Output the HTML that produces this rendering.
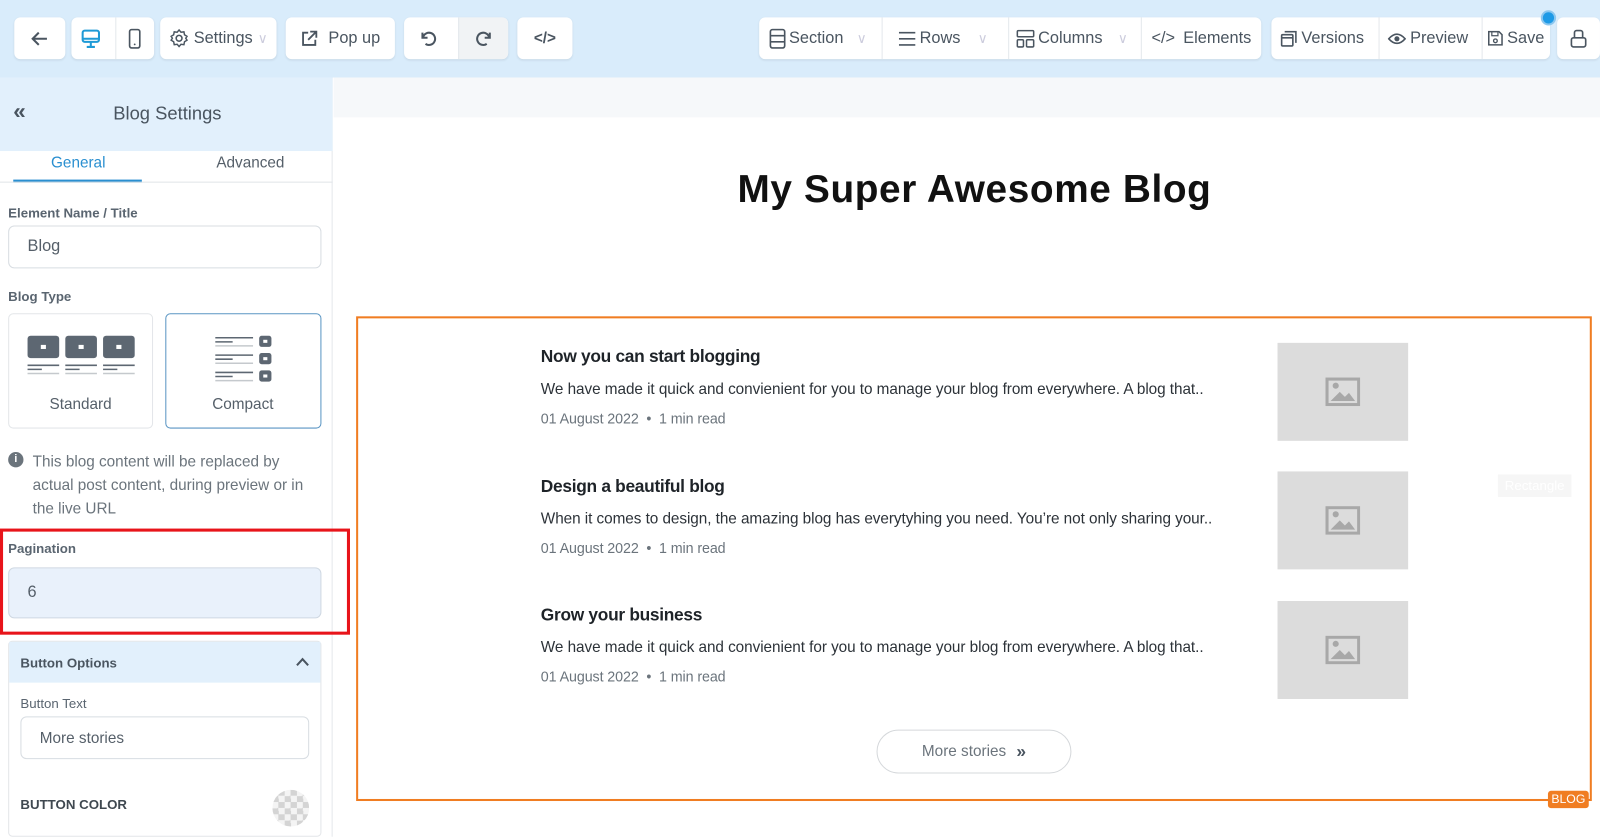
<!DOCTYPE html>
<html><head><meta charset="utf-8"><style>
*{box-sizing:border-box;margin:0;padding:0}
html,body{width:1600px;height:837px;overflow:hidden;background:#fff}
body{font-family:"Liberation Sans",sans-serif;color:#4a5560}
#w{position:absolute;left:0;top:0;width:1568px;height:820px;transform:scale(1.0204);transform-origin:0 0}
.a{position:absolute}
.btn{position:absolute;top:17px;height:41px;background:#fff;border-radius:6px;box-shadow:0 1px 2px rgba(0,0,0,.08);display:flex;align-items:center;justify-content:center;font-size:16px;color:#4a5560;gap:5px}
.sep{border-left:1px solid #e4e8ec}
svg{display:block}
.lbl{position:absolute;left:8px;font-size:13px;font-weight:bold;color:#5a6570}
.inp{position:absolute;left:8px;width:307px;height:42px;border:1px solid #d8dde2;border-radius:6px;font-size:16px;color:#555f69;padding-left:18px;display:flex;align-items:center}
.post{position:absolute;left:530px;font-family:"Liberation Sans",sans-serif}
.post h3{font-size:17px;font-weight:bold;color:#1e2328;letter-spacing:-.3px}
.post p{font-size:15px;color:#2c3238;margin-top:13px;letter-spacing:-.05px}
.post .m{font-size:14px;color:#6b747c;margin-top:12px;letter-spacing:-.1px}
.img{position:absolute;left:1252px;width:128px;height:96px;background:#dcdcdc;display:flex;align-items:center;justify-content:center}
</style></head><body><div id="w">
<div class="a" style="left:0;top:0;width:1568px;height:76px;background:#d9ecfb"></div>
<div class="btn" style="left:14px;width:50px"><svg width="18" height="18" viewBox="0 0 18 18"><path d="M16 9H3M8 3L2 9l6 6" stroke="#4a5560" stroke-width="2" fill="none"/></svg></div>
<div class="btn" style="left:70px;width:81px;justify-content:flex-start">
 <div style="width:40px;display:flex;justify-content:center"><svg width="20" height="20" viewBox="0 0 20 20"><rect x="2" y="2" width="16" height="11" rx="2" stroke="#1e9ad6" stroke-width="2" fill="none"/><path d="M2 10h16M10 13v4M6 18h8" stroke="#1e9ad6" stroke-width="2"/></svg></div>
 <div class="sep" style="width:41px;height:41px;display:flex;justify-content:center;align-items:center"><svg width="14" height="20" viewBox="0 0 14 20"><rect x="2" y="1" width="10" height="18" rx="2" stroke="#4a5560" stroke-width="1.6" fill="none"/><circle cx="7" cy="15.5" r=".9" fill="#4a5560"/></svg></div></div>
<div class="btn" style="left:157px;width:114px"><svg width="19" height="19" viewBox="0 0 20 20"><circle cx="10" cy="10" r="3" stroke="#4a5560" stroke-width="1.6" fill="none"/><path d="M10 1.5l2 2.3 3-.4.6 3 2.6 1.6-1.3 2 1.3 2-2.6 1.6-.6 3-3-.4-2 2.3-2-2.3-3 .4-.6-3L1.8 12l1.3-2-1.3-2 2.6-1.6.6-3 3 .4z" stroke="#4a5560" stroke-width="1.5" fill="none"/></svg>Settings<span style="color:#ccd;font-size:13px">&#x2228;</span></div>
<div class="btn" style="left:280px;width:107px"><svg width="18" height="18" viewBox="0 0 18 18"><path d="M8 3H3v12h12v-5M10 2h6v6M16 2L8 10" stroke="#4a5560" stroke-width="1.8" fill="none"/></svg>&nbsp;Pop up</div>
<div class="btn" style="left:396px;width:102px;justify-content:flex-start;overflow:hidden"><div style="width:50px;display:flex;justify-content:center"><svg width="18" height="18" viewBox="0 0 18 18"><path d="M3 3v5h5M3.5 8A6 6 0 1 1 6 14" stroke="#4a5560" stroke-width="2" fill="none"/></svg></div><div class="sep" style="width:52px;height:41px;background:#f1f3f5;display:flex;justify-content:center;align-items:center"><svg width="18" height="18" viewBox="0 0 18 18"><path d="M15 3v5h-5M14.5 8A6 6 0 1 0 12 14" stroke="#4a5560" stroke-width="2" fill="none"/></svg></div></div>
<div class="btn" style="left:507px;width:54px;font-weight:bold;font-size:15px">&lt;/&gt;</div>
<div class="btn" style="left:744px;width:492px;justify-content:flex-start">
 <div style="width:119px;display:flex;align-items:center;justify-content:center;gap:3px"><svg width="16" height="20" viewBox="0 0 16 20"><rect x="1" y="1" width="14" height="18" rx="2" stroke="#4a5560" stroke-width="1.6" fill="none"/><path d="M1 7h14M1 13h14" stroke="#4a5560" stroke-width="1.6"/></svg>Section <span style="color:#ccd;font-size:13px;margin-left:10px">&#x2228;</span></div>
 <div class="sep" style="width:122px;height:41px;display:flex;align-items:center;justify-content:center;gap:3px"><svg width="18" height="16" viewBox="0 0 18 16"><path d="M1 2h16M1 8h16M1 14h16" stroke="#4a5560" stroke-width="1.6"/></svg>Rows <span style="color:#ccd;font-size:13px;margin-left:14px">&#x2228;</span></div>
 <div class="sep" style="width:129px;height:41px;display:flex;align-items:center;justify-content:center;gap:3px"><svg width="18" height="18" viewBox="0 0 18 18"><rect x="1" y="1" width="16" height="6" rx="1" stroke="#4a5560" stroke-width="1.5" fill="none"/><rect x="1" y="10" width="6" height="7" rx="1" stroke="#4a5560" stroke-width="1.5" fill="none"/><rect x="10" y="10" width="7" height="7" rx="1" stroke="#4a5560" stroke-width="1.5" fill="none"/></svg>Columns <span style="color:#ccd;font-size:13px;margin-left:12px">&#x2228;</span></div>
 <div class="sep" style="width:122px;height:41px;display:flex;align-items:center;justify-content:center;gap:8px"><span style="font-size:16px">&lt;/&gt;</span>Elements</div></div>
<div class="btn" style="left:1246px;width:273px;justify-content:flex-start">
 <div style="width:104px;display:flex;align-items:center;justify-content:center;gap:4px"><svg width="16" height="16" viewBox="0 0 16 16"><rect x="1" y="4" width="11" height="11" rx="1" stroke="#4a5560" stroke-width="1.6" fill="none"/><path d="M4 1h11v11M1 7h11" stroke="#4a5560" stroke-width="1.6" fill="none"/></svg>Versions</div>
 <div class="sep" style="width:99px;height:41px;display:flex;align-items:center;justify-content:center;gap:4px"><svg width="18" height="14" viewBox="0 0 18 14"><path d="M1 7Q9-2 17 7Q9 16 1 7z" stroke="#4a5560" stroke-width="1.6" fill="none"/><circle cx="9" cy="7" r="2.5" fill="#4a5560"/></svg>Preview</div>
 <div class="sep" style="width:70px;height:41px;display:flex;align-items:center;justify-content:center;gap:4px"><svg width="15" height="15" viewBox="0 0 15 15"><path d="M1 1h10l3 3v10H1z" stroke="#4a5560" stroke-width="1.5" fill="none"/><rect x="4" y="1" width="6" height="4" stroke="#4a5560" stroke-width="1.2" fill="none"/><circle cx="7.5" cy="10" r="1.8" stroke="#4a5560" stroke-width="1.3" fill="none"/></svg>Save</div></div>
<div class="a" style="left:1510px;top:10px;width:15px;height:15px;border-radius:50%;background:#1e9ae6;border:2px solid #8cc7ef"></div>
<div class="btn" style="left:1526px;width:42px"><svg width="18" height="20" viewBox="0 0 18 20"><rect x="2" y="9" width="14" height="9" rx="2" stroke="#4a5560" stroke-width="1.6" fill="none"/><path d="M5 9V4a2 2 0 0 1 2-2h4a2 2 0 0 1 2 2v5" stroke="#4a5560" stroke-width="1.6" fill="none"/></svg></div>

<div class="a" style="left:0;top:76px;width:326px;height:744px;background:#fff;border-right:1px solid #e4e8ec"></div>
<div class="a" style="left:0;top:76px;width:326px;height:72px;background:#e2f0fc"></div>
<div class="a" style="left:13px;top:96px;font-size:22px;font-weight:bold;color:#4a5560">&laquo;</div>
<div class="a" style="left:111px;top:101px;font-size:18px;color:#4a5560">Blog Settings</div>
<div class="a" style="left:50px;top:151px;font-size:15px;color:#2a8fd0">General</div>
<div class="a" style="left:212px;top:151px;font-size:15px;color:#555f69">Advanced</div>
<div class="a" style="left:13px;top:176px;width:126px;height:3px;background:#2a8fd0"></div>
<div class="a" style="left:0;top:178px;width:326px;height:1px;background:#e0e4e8"></div>
<div class="lbl" style="top:201px">Element Name / Title</div>
<div class="inp" style="top:221px">Blog</div>
<div class="lbl" style="top:283px">Blog Type</div>
<div class="a" style="left:8px;top:307px;width:142px;height:113px;border:1px solid #e3e6e9;border-radius:5px">
 <svg class="a" style="left:17px;top:20px" width="108" height="42" viewBox="0 0 108 42"><g fill="#5d6772"><rect x="1" y="1" width="31" height="22" rx="3"/><rect x="38" y="1" width="31" height="22" rx="3"/><rect x="75" y="1" width="31" height="22" rx="3"/></g><g fill="#fff"><rect x="14" y="10" width="5" height="4"/><rect x="51" y="10" width="5" height="4"/><rect x="88" y="10" width="5" height="4"/></g><g stroke="#5d6772" stroke-width="1.5"><path d="M1 30h31M38 30h31M75 30h31M1 34h14M38 34h14M75 34h14"/></g><g stroke="#c5c9cd" stroke-width="1.5"><path d="M1 38h31M38 38h31M75 38h31"/></g></svg>
 <div class="a" style="left:0;width:140px;top:80px;text-align:center;font-size:15px;color:#555f69">Standard</div></div>
<div class="a" style="left:162px;top:307px;width:153px;height:113px;border:1.5px solid #5a95c3;border-radius:5px">
 <svg class="a" style="left:47px;top:20px" width="58" height="50" viewBox="0 0 58 50"><g stroke="#5d6772" stroke-width="1.5"><path d="M1 3h37M1 7h17M1 20h37M1 24h17M1 37h37M1 41h17"/></g><g stroke="#c5c9cd" stroke-width="1.5"><path d="M1 11h37M1 28h37M1 45h37"/></g><g fill="#5d6772"><rect x="44" y="1" width="12" height="11" rx="2.5"/><rect x="44" y="18" width="12" height="11" rx="2.5"/><rect x="44" y="35" width="12" height="11" rx="2.5"/></g><g fill="#fff"><rect x="48" y="5" width="4" height="3"/><rect x="48" y="22" width="4" height="3"/><rect x="48" y="39" width="4" height="3"/></g></svg>
 <div class="a" style="left:0;width:150px;top:80px;text-align:center;font-size:15px;color:#555f69">Compact</div></div>
<div class="a" style="left:8px;top:443px;width:15px;height:15px;border-radius:50%;background:#6b747c;color:#fff;font-size:11px;font-weight:bold;text-align:center;line-height:15px">i</div>
<div class="a" style="left:32px;top:441px;width:280px;font-size:15px;line-height:23px;color:#6b747c">This blog content will be replaced by actual post content, during preview or in the live URL</div>
<div class="a" style="left:0;top:518px;width:343px;height:104px;border:3px solid #e8141a"></div>
<div class="lbl" style="top:530px">Pagination</div>
<div class="inp" style="top:556px;height:50px;background:#e9f1fb;border-color:#cfd8e2">6</div>
<div class="a" style="left:8px;top:628px;width:307px;height:192px;border:1px solid #e3e6e9;border-radius:4px"></div>
<div class="a" style="left:9px;top:629px;width:305px;height:40px;background:#e2f0fc"></div>
<div class="a" style="left:20px;top:642px;font-size:13px;font-weight:bold;color:#4a5560">Button Options</div>
<svg class="a" style="left:290px;top:644px" width="13" height="9" viewBox="0 0 13 9"><path d="M1 8l5.5-6L12 8" stroke="#4a5560" stroke-width="2" fill="none"/></svg>
<div class="a" style="left:20px;top:682px;font-size:13px;color:#5a6570">Button Text</div>
<div class="inp" style="left:20px;top:702px;width:283px;height:42px;font-size:15px">More stories</div>
<div class="a" style="left:20px;top:781px;font-size:13px;font-weight:bold;color:#3f4850">BUTTON COLOR</div>
<div class="a" style="left:267px;top:774px;width:36px;height:36px;border-radius:50%;background:repeating-conic-gradient(#d4d4d4 0 25%,#f4f4f4 0 50%) 0 0/12px 12px"></div>

<div class="a" style="left:327px;top:76px;width:1241px;height:39px;background:#f6f8fa"></div>
<div class="a" style="left:327px;top:165px;width:1256px;text-align:center;font-size:38px;font-weight:bold;color:#111;letter-spacing:.6px">My Super Awesome Blog</div>
<div class="a" style="left:349px;top:310px;width:1211px;height:475px;border:2px solid #f07d22"></div>
<div class="a" style="left:1517px;top:775px;width:40px;height:17px;background:#f07d22;border-radius:3px;color:#fff;font-size:12px;text-align:center;line-height:17px">BLOG</div>
<div class="a" style="left:1468px;top:465px;width:72px;height:22px;background:#f6f6f6;color:#fff;font-size:13px;text-align:center;line-height:22px">Rectangle</div>
<div class="post" style="top:340px"><h3>Now you can start blogging</h3><p>We have made it quick and convienient for you to manage your blog from everywhere. A blog that..</p><div class="m">01 August 2022 &nbsp;&bull;&nbsp; 1 min read</div></div>
<div class="post" style="top:467px"><h3>Design a beautiful blog</h3><p>When it comes to design, the amazing blog has everytyhing you need. You’re not only sharing your..</p><div class="m">01 August 2022 &nbsp;&bull;&nbsp; 1 min read</div></div>
<div class="post" style="top:593px"><h3>Grow your business</h3><p>We have made it quick and convienient for you to manage your blog from everywhere. A blog that..</p><div class="m">01 August 2022 &nbsp;&bull;&nbsp; 1 min read</div></div>
<div class="img" style="top:336px"><svg width="34" height="28" viewBox="0 0 34 28"><rect x="1.5" y="1.5" width="31" height="25" fill="none" stroke="#a8a8a8" stroke-width="3"/><path d="M5 23l9-9 5 5 4-4 6 8z" fill="#a8a8a8"/><circle cx="10" cy="8" r="3" fill="#a8a8a8"/></svg></div>
<div class="img" style="top:462px"><svg width="34" height="28" viewBox="0 0 34 28"><rect x="1.5" y="1.5" width="31" height="25" fill="none" stroke="#a8a8a8" stroke-width="3"/><path d="M5 23l9-9 5 5 4-4 6 8z" fill="#a8a8a8"/><circle cx="10" cy="8" r="3" fill="#a8a8a8"/></svg></div>
<div class="img" style="top:589px"><svg width="34" height="28" viewBox="0 0 34 28"><rect x="1.5" y="1.5" width="31" height="25" fill="none" stroke="#a8a8a8" stroke-width="3"/><path d="M5 23l9-9 5 5 4-4 6 8z" fill="#a8a8a8"/><circle cx="10" cy="8" r="3" fill="#a8a8a8"/></svg></div>
<div class="a" style="left:859px;top:715px;width:191px;height:43px;border:1px solid #d5d8db;border-radius:22px;display:flex;align-items:center;justify-content:center;gap:10px;font-size:15px;color:#6b747c">More stories <span style="font-weight:bold;color:#4a5560;font-size:17px">&raquo;</span></div>
</div></body></html>
